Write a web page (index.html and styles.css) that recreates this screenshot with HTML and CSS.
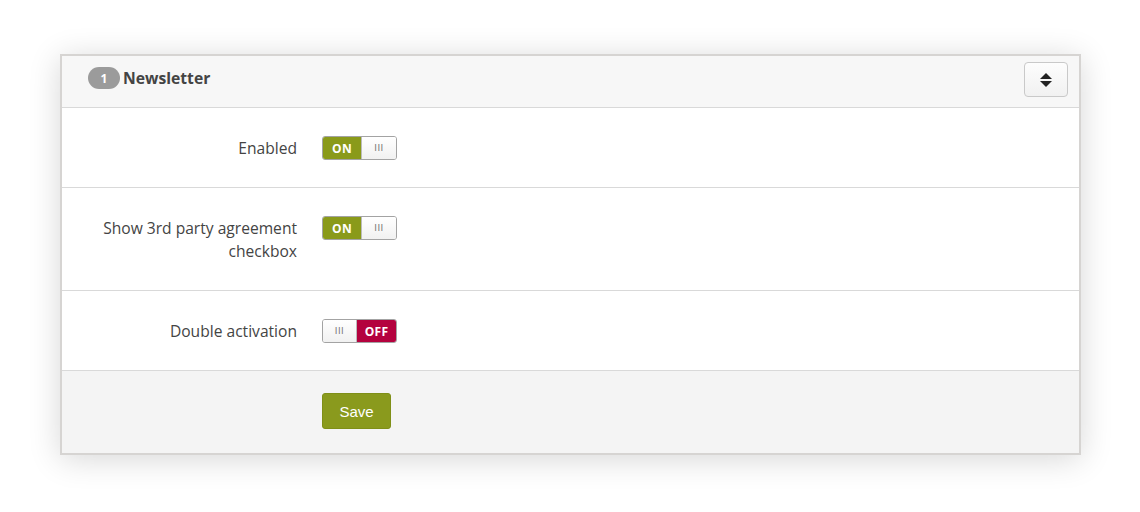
FILE: index.html
```html
<!DOCTYPE html>
<html>
<head>
<meta charset="utf-8">
<link rel="stylesheet" href="styles.css">
</head>
<body>
<div class="panel">
  <div class="panel-head">
    <div class="title"><span class="badge">1</span><span class="name">Newsletter</span></div>
    <button class="sort-btn" type="button" aria-label="Toggle">
      <svg width="12" height="14" viewBox="0 0 12 14"><path d="M6 0 L12 6 H0 Z" fill="#222"/><path d="M0 8 H12 L6 14 Z" fill="#222"/></svg>
    </button>
  </div>
  <div class="row">
    <div class="label">Enabled</div>
    <div class="switch on"><span class="state">ON</span><span class="handle">III</span></div>
  </div>
  <div class="row">
    <div class="label">Show 3rd party agreement checkbox</div>
    <div class="switch on"><span class="state">ON</span><span class="handle">III</span></div>
  </div>
  <div class="row">
    <div class="label">Double activation</div>
    <div class="switch off"><span class="handle">III</span><span class="state">OFF</span></div>
  </div>
  <div class="panel-foot">
    <button class="save" type="button">Save</button>
  </div>
</div>
</body>
</html>
```

FILE: styles.css
```css
* { box-sizing: border-box; }
html, body { min-height: 100%; }
body {
  margin: 0;
  min-height: 512px;
  padding: 54px 0 40px 60px;
  background: #ffffff;
  font-family: "Open Sans", "Liberation Sans", sans-serif;
  color: #444;
}
.panel {
  width: 1021px;
  border: 2px solid #d6d4d2;
  background: #fff;
  box-shadow: 0 4px 30px rgba(0,0,0,0.16);
}
.panel-head {
  height: 52px;
  background: #f7f7f7;
  border-bottom: 1px solid #d9d9d9;
  display: flex;
  align-items: flex-start;
  justify-content: space-between;
  padding: 6px 11px 0 26px;
}
.title { display: flex; align-items: center; gap: 3px; margin-top: 5px; }
.badge {
  display: inline-flex;
  align-items: center;
  justify-content: center;
  width: 32px;
  height: 22px;
  border-radius: 11px;
  background: #9b9b9b;
  color: #fff;
  font-size: 12px;
  font-weight: 700;
}
.name { font-size: 15.7px; font-weight: 700; color: #444; }
.sort-btn {
  width: 44px;
  height: 35px;
  border: 1px solid #c9c9c9;
  border-radius: 4px;
  background: linear-gradient(#fdfdfd, #f1f1f1);
  display: flex;
  align-items: center;
  justify-content: center;
  padding: 0;
}
.row {
  display: grid;
  grid-template-columns: 235px auto;
  column-gap: 25px;
  align-items: start;
  padding: 28px 0 27px;
  border-bottom: 1px solid #d9d9d9;
}
.label {
  text-align: right;
  font-size: 15.6px;
  line-height: 23px;
  color: #444;
  padding-left: 30px;
  margin-top: 1px;
}
.switch {
  display: flex;
  width: 75px;
  height: 24px;
  border: 1px solid #a3a3a3;
  border-radius: 3px;
  overflow: hidden;
  font-size: 12px;
  font-weight: 700;
}
.switch .state {
  flex: 0 0 38px;
  display: flex;
  align-items: center;
  justify-content: center;
  color: #fff;
  letter-spacing: 0.3px;
}
.switch.on .state { background: #8a9a1a; }
.switch.off .state { background: #b4023e; flex-basis: 39px; }
.switch .handle {
  flex: 1;
  display: flex;
  align-items: center;
  justify-content: center;
  background: linear-gradient(#ffffff, #f1f1f1);
  color: #777;
  font-family: "DejaVu Sans", sans-serif;
  font-weight: 400;
  font-size: 9px;
  letter-spacing: 0.5px;
}
.switch.on .handle { border-left: 1px solid #bbb; }
.switch.off .handle { border-right: 1px solid #bbb; }
.panel-foot {
  background: #f4f4f4;
  height: 82px;
  padding: 22px 0 0 260px;
}
.save {
  width: 69px;
  height: 36px;
  background: #8a9a1d;
  border: 1px solid #7f8f17;
  border-radius: 3px;
  color: #fff;
  font-family: "Liberation Sans", Arial, sans-serif;
  font-size: 15px;
  padding: 0;
}
```
